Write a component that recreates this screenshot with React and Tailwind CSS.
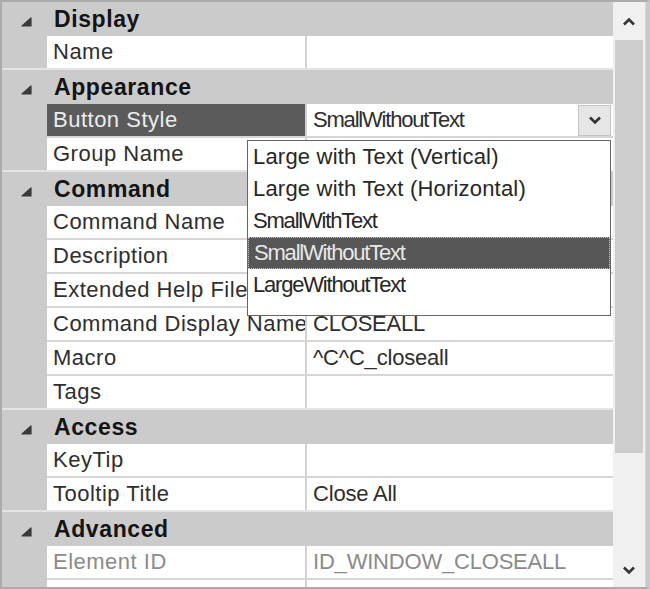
import React from "react";

const rows = [
  { h: "Display" },
  { n: "Name", v: "", last: true },
  { h: "Appearance" },
  { n: "Button Style", v: "SmallWithoutText", sel: true, tight: true },
  { n: "Group Name", v: "", last: true },
  { h: "Command" },
  { n: "Command Name", v: "" },
  { n: "Description", v: "" },
  { n: "Extended Help File", v: "" },
  { n: "Command Display Name", v: "CLOSEALL" },
  { n: "Macro", v: "^C^C_closeall" },
  { n: "Tags", v: "", last: true },
  { h: "Access" },
  { n: "KeyTip", v: "" },
  { n: "Tooltip Title", v: "Close All", last: true },
  { h: "Advanced" },
  { n: "Element ID", v: "ID_WINDOW_CLOSEALL", dim: true },
  { n: "Element ID", v: "RBNU_191_83176", dim: true },
];

function Tri() {
  return (
    <svg width="12" height="10" viewBox="0 0 12 10">
      <polygon
        points="11,1 11,9 2,9"
        fill="#3a3a3a"
        stroke="#3a3a3a"
        strokeWidth="1.2"
        strokeLinejoin="round"
      />
    </svg>
  );
}

function Chevron({ up }) {
  return (
    <svg width="14" height="9" viewBox="0 0 14 9">
      <polyline
        points={up ? "2,7.5 7,2.5 12,7.5" : "2,1.5 7,6.5 12,1.5"}
        fill="none"
        stroke="#333"
        strokeWidth="2.6"
        strokeLinejoin="miter"
      />
    </svg>
  );
}

function Header({ label }) {
  return (
    <div className="flex h-[34px] shrink-0 items-center bg-[#cbcbcb]">
      <div className="flex w-[45px] items-center pl-[18px] pt-[5px]">
        <Tri />
      </div>
      <div className="pl-[7px] text-[23px] font-bold leading-none tracking-[0.6px] text-[#141414]">{label}</div>
    </div>
  );
}

function Prop({ n, v, last, sel, dim, tight }) {
  const txt = dim ? "text-[#8a8a8a]" : "text-[#2e2e2e]";
  return (
    <div className="flex h-[34px] shrink-0 flex-col">
      <div className="flex flex-1">
        <div className="w-[45px] bg-[#cbcbcb]" />
        <div
          className={
            "flex w-[258px] items-center overflow-hidden whitespace-nowrap pl-[6px] text-[22px] leading-none tracking-[0.5px] " +
            (sel ? "bg-[#5b5b5b] text-[#ececec]" : "bg-white " + txt)
          }
        >
          {n}
        </div>
        <div className="w-[2px] bg-[#d2d2d2]" />
        <div className={"flex flex-1 items-center bg-white pl-[6px] text-[22px] leading-none whitespace-nowrap " + txt}>
          <span className={"flex-1 " + (tight ? "tracking-[-1.2px]" : "tracking-[-0.2px]")}>{v}</span>
          {sel && (
            <div className="mr-[2px] flex h-[31px] w-[33px] items-center justify-center border border-[#c4c4c4] bg-[#e6e6e6]">
              <Chevron />
            </div>
          )}
        </div>
      </div>
      <div className="flex h-[2px]">
        <div className={"w-[45px] " + (last ? "bg-[#e4e4e4]" : "bg-[#cbcbcb]")} />
        <div className={"flex-1 " + (last ? "bg-[#e4e4e4]" : "bg-[#d6d6d6]")} />
      </div>
    </div>
  );
}

const items = [
  { t: "Large with Text (Vertical)" },
  { t: "Large with Text (Horizontal)" },
  { t: "SmallWithText", tight: true },
  { t: "SmallWithoutText", tight: true, sel: true },
  { t: "LargeWithoutText", tight: true },
];

export default function App() {
  return (
    <div className="relative h-[589px] w-[650px] overflow-hidden border-t-2 border-b-2 border-l-2 border-r-4 border-[#ababab] border-r-[#c9c9c9] bg-[#cbcbcb] font-['Liberation_Sans',Arial,sans-serif]">
      <div className="flex h-full">
        <div className="flex w-[611px] flex-col overflow-hidden">
          {rows.map((r, i) => (r.h ? <Header key={i} label={r.h} /> : <Prop key={i} {...r} />))}
        </div>
        <div className="flex w-[33px] flex-col border-r border-[#d8d8d8] bg-[#f0f0f0]">
          <div className="flex h-[38px] shrink-0 items-center justify-center">
            <Chevron up />
          </div>
          <div className="mx-[2px] h-[413px] shrink-0 bg-[#cdcdcd]" />
          <div className="flex-1" />
          <div className="flex h-[34px] shrink-0 items-center justify-center">
            <Chevron />
          </div>
        </div>
      </div>

      {/* dropdown list */}
      <div className="absolute left-[245px] top-[138px] h-[176px] w-[364px] border border-[#666] bg-white text-[22px] leading-none text-[#262626]">
        {items.map((it, i) => (
          <div
            key={i}
            className={
              "flex h-[32px] items-center whitespace-nowrap pl-[5px] " +
              (it.tight ? "tracking-[-1.2px] " : "tracking-[0.2px] ") +
              (it.sel ? "border border-dotted border-[#c8c8c8] bg-[#575757] text-[#e8e8e8]" : "")
            }
          >
            {it.t}
          </div>
        ))}
      </div>
    </div>
  );
}
